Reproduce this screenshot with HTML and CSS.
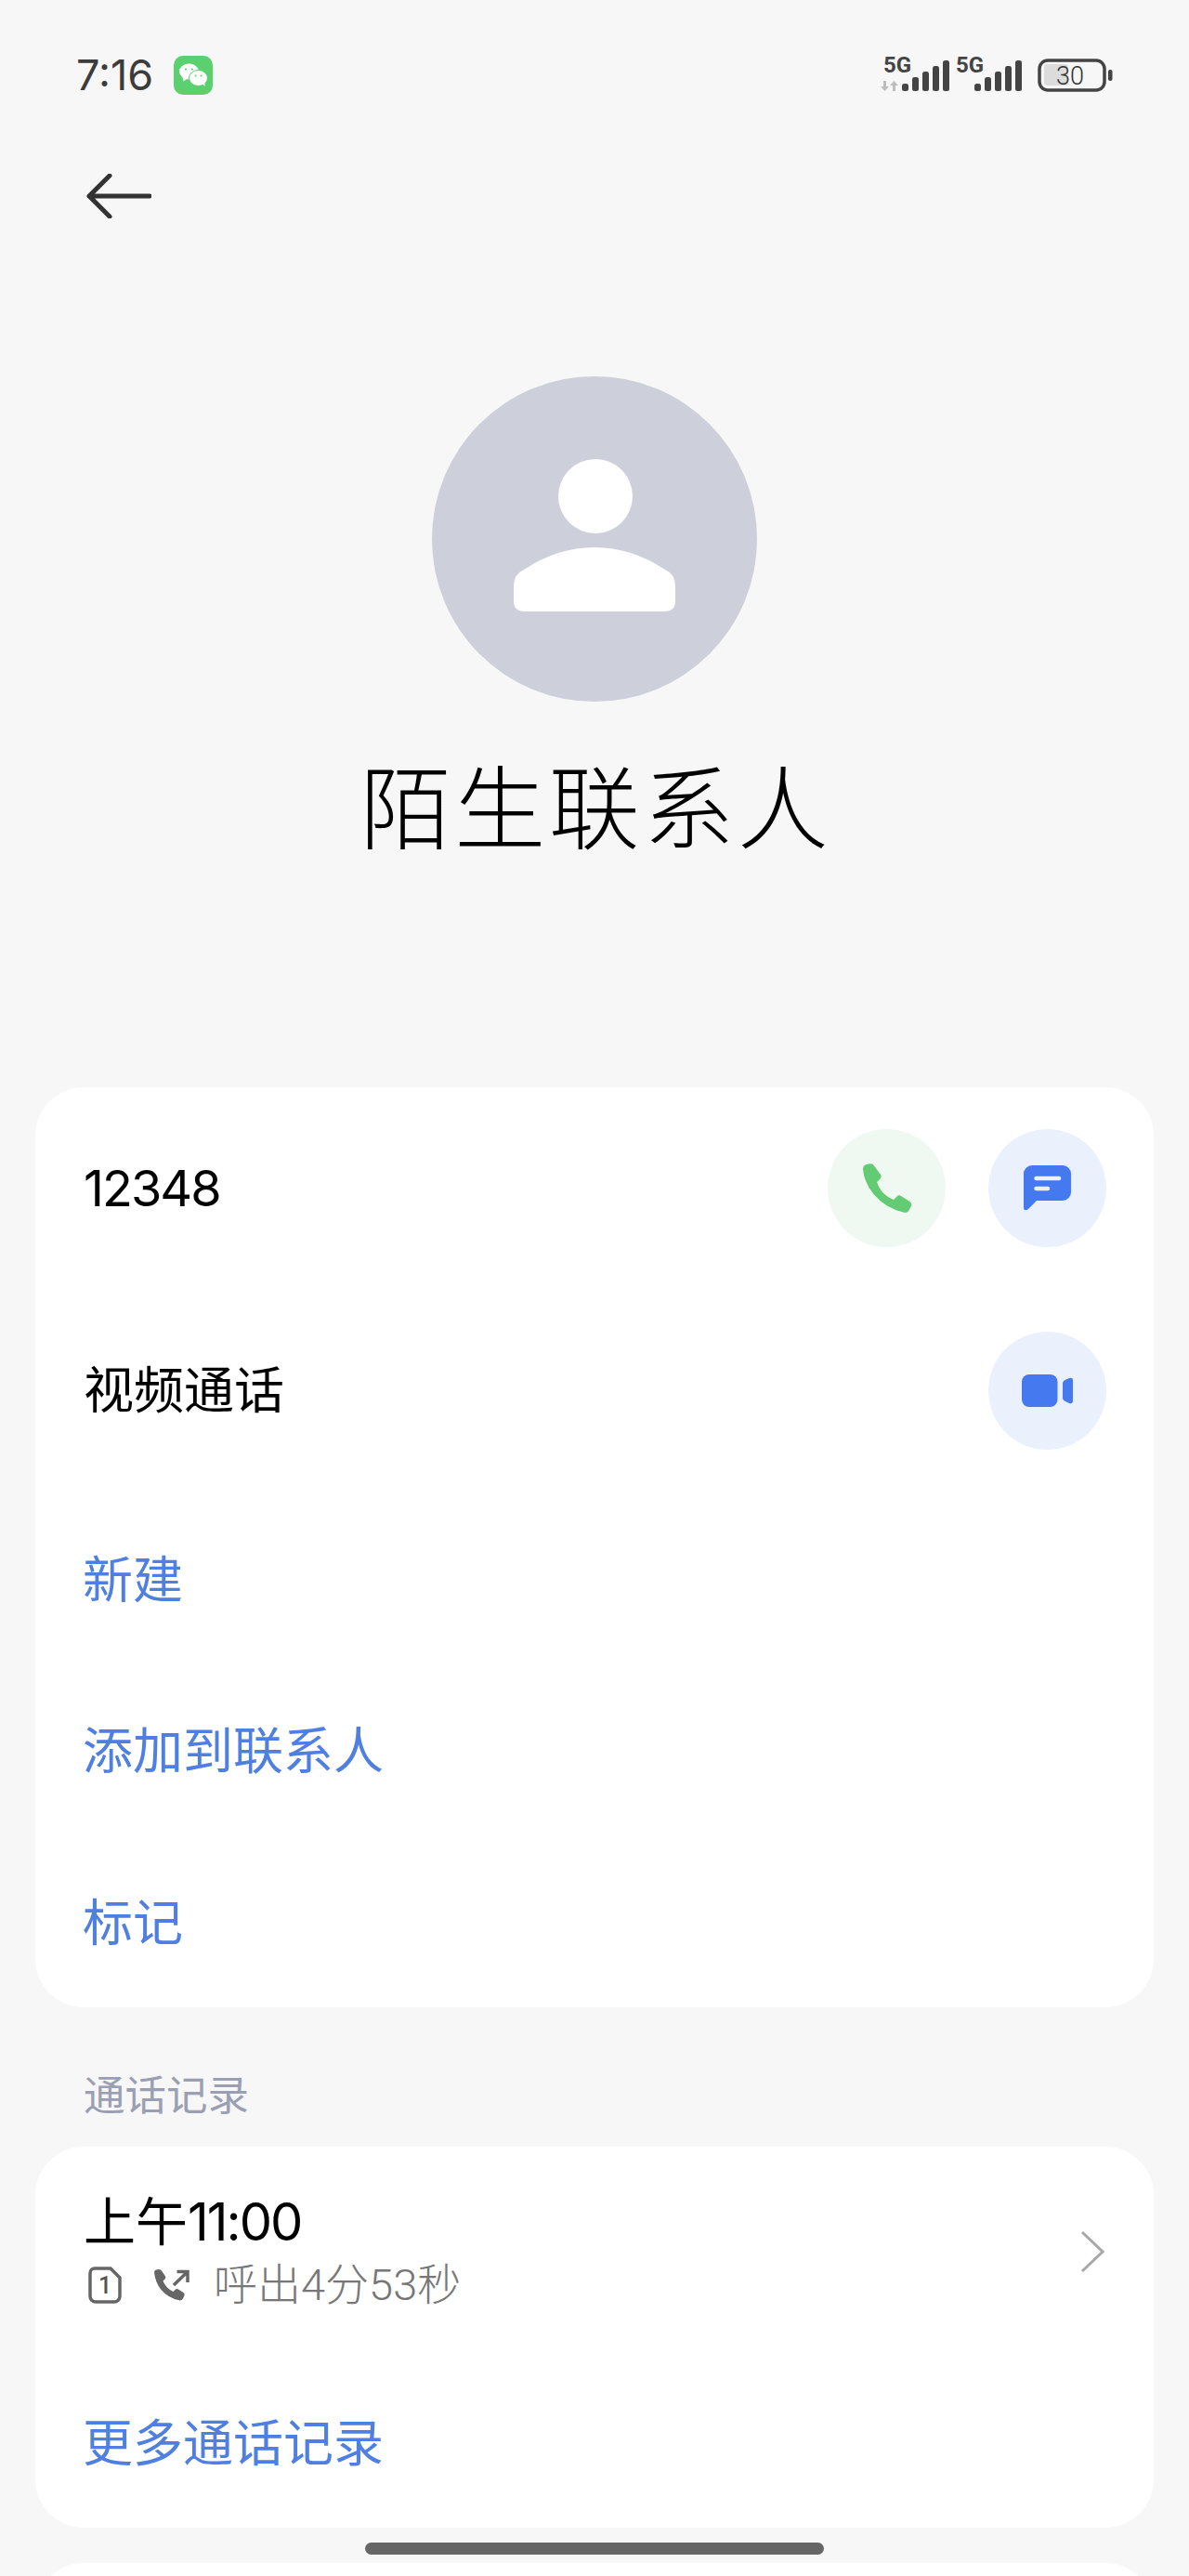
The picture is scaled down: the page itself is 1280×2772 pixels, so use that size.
FILE: index.html
```html
<!DOCTYPE html>
<html lang="zh-CN">
  <head>
    <meta charset="UTF-8" />
    <meta name="viewport" content="width=device-width, initial-scale=1.0" />
    <title>陌生联系人</title>
    <link rel="stylesheet" href="styles.css">
  </head>
  <body>
    <!--
      Status bar
    -->
    <header class="status">
      <div class="status-left">
        <span class="time">7:16</span>
        <svg class="wechat" viewBox="0 0 42 42" aria-hidden="true">
          <rect width="42" height="42" rx="10" fill="#5ad06e" />
          <ellipse cx="16.500" cy="17" rx="10.500" ry="8.500" fill="#fff" />
          <path d="M9.500 22.500L10.500 27.500L15 24.500Z" fill="#fff" />
          <ellipse cx="26.500" cy="24" rx="10" ry="8.500" fill="#fff" stroke="#5ad06e" stroke-width="1" />
          <path d="M31 30L33.500 33L33.500 28Z" fill="#fff" />
          <circle cx="13" cy="14.500" r="1.100" fill="#5ad06e" />
          <circle cx="20" cy="14.500" r="1.100" fill="#5ad06e" />
          <circle cx="23.500" cy="21.500" r="1" fill="#5ad06e" />
          <circle cx="29.500" cy="21.500" r="1" fill="#5ad06e" />
        </svg>
      </div>
      <svg class="status-right" viewBox="945 50 255 53" aria-hidden="true">
        <text class="net" x="951" y="78">5G</text>
        <path d="M951 87h3v6h3l-4.500 5-4.500-5h3zM961 98h3v-6h3l-4.500-5-4.500 5h3z" fill="#bdbdbd" />
        <rect x="971" y="90" width="7" height="8" rx="2.500" fill="#444" />
        <rect x="982" y="83" width="7" height="15" rx="2.500" fill="#444" />
        <rect x="993" y="77" width="7" height="21" rx="2.500" fill="#444" />
        <rect x="1004" y="71" width="7" height="27" rx="2.500" fill="#444" />
        <rect x="1015" y="65" width="7" height="33" rx="2.500" fill="#444" />
        <text class="net" x="1029" y="78">5G</text>
        <rect x="1049" y="90" width="7" height="8" rx="2.500" fill="#444" />
        <rect x="1060" y="83" width="7" height="15" rx="2.500" fill="#444" />
        <rect x="1071" y="77" width="7" height="21" rx="2.500" fill="#444" />
        <rect x="1082" y="71" width="7" height="27" rx="2.500" fill="#444" />
        <rect x="1093" y="65" width="7" height="33" rx="2.500" fill="#444" />
        <rect x="1124" y="69" width="26" height="23" rx="3" fill="#dcdcdc" />
        <rect x="1119" y="65" width="70" height="32" rx="9" fill="none" stroke="#444" stroke-width="3.500" />
        <rect x="1193" y="75" width="4.500" height="12" rx="2" fill="#444" />
        <text class="level" x="1152" y="91" text-anchor="middle">30</text>
      </svg>
    </header>

    <nav class="topbar">
      <svg class="back" viewBox="0 0 70 48" aria-hidden="true">
        <path d="M68 24H3M25 2L3 24l22 22" fill="none" stroke="#333" stroke-width="5" stroke-linecap="round" stroke-linejoin="round" />
      </svg>
    </nav>

    <!--
      Contact head
    -->
    <section class="contact">
      <svg class="avatar" viewBox="0 0 350 350" aria-hidden="true">
        <circle cx="175" cy="175" r="175" fill="#cdcfdb" />
        <ellipse cx="176" cy="129" rx="40" ry="40" fill="#fff" />
        <path d="M88 225Q88 213 99 208Q135 184 175 184Q215 184 251 208Q262 213 262 225V242Q262 253 250 253H100Q88 253 88 242Z" fill="#fff" />
      </svg>
      <h1 class="name">陌生联系人</h1>
    </section>

    <!--
      Actions
    -->
    <main>
      <section class="card actions">
        <div class="row">
          <span class="label number">12348</span>
          <div class="btns">
            <button class="round green" type="button" aria-label="通话">
              <svg class="icon-call" viewBox="0 0 54 54" aria-hidden="true">
                <path d="M1 6Q1 2 5 1L9 .3Q11.500 0 13 2.500L20 12Q21.500 14.500 19.500 16.500L16 20Q19 28 23 32Q28 37 34 39L37.500 35.500Q39.500 33.500 42 35L51.500 41Q54 43 53 45.500L50.500 50.500Q48.500 54 44.500 52.500Q25 48 12.500 33Q2 20 1 6Z" fill="#62cb74" />
              </svg>
            </button>
            <button class="round blue" type="button" aria-label="短信">
              <svg class="icon-msg" viewBox="0 0 51 49" aria-hidden="true">
                <path d="M9 0H42A9 9 0 0 1 51 9V29A9 9 0 0 1 42 38H14L4.500 47.500Q0 50 0 45V9A9 9 0 0 1 9 0Z" fill="#4479f0" />
                <path d="M13.500 14H38M13.500 25H26" fill="none" stroke="#ebf1fc" stroke-width="4.500" stroke-linecap="round" />
              </svg>
            </button>
          </div>
        </div>
        <div class="row video">
          <span class="label">视频通话</span>
          <div class="btns">
            <button class="round blue" type="button" aria-label="视频通话">
              <svg class="icon-video" viewBox="0 0 55 35" aria-hidden="true">
                <rect width="38.500" height="35" rx="8" fill="#4479f0" />
                <path d="M44 9.500Q44 7.500 46 6.300L51 4Q55 3 55 6V28Q55 32 51 31L46 28.500Q44 27.500 44 25.500Z" fill="#4479f0" />
              </svg>
            </button>
          </div>
        </div>
        <a class="link first">新建</a>
        <a class="link">添加到联系人</a>
        <a class="link">标记</a>
      </section>

      <h2 class="section-title">通话记录</h2>

      <section class="card history">
        <div class="call">
          <div class="call-info">
            <p class="call-time">上午<span class="digits">11:00</span></p>
            <p class="call-meta">
              <svg class="icon-sim" viewBox="0 0 36 40" aria-hidden="true">
                <path d="M7 2H24L34 12V32A6 6 0 0 1 28 38H8A6 6 0 0 1 2 32V7A5 5 0 0 1 7 2Z" fill="none" stroke="#666" stroke-width="3.500" />
                <text class="sim-num" x="18" y="29" text-anchor="middle">1</text>
              </svg>
              <svg class="icon-out" viewBox="0 0 40 34" aria-hidden="true">
                <path d="M1 3Q1 1 3 .5L6 0Q8 0 9 1.500L13 7.500Q14 9 12.500 10.500L10.500 12.500Q12 16.500 15 19.500Q18 22.500 21.500 24L23.500 22Q25 20.500 27 21.500L32.500 25Q34 26 33.500 28L32 31.500Q31 33.500 28.500 33.500Q16 31 8.500 22Q2 14 1 3Z" fill="#666" />
                <path d="M22 17L36 3.500M25.500 2.500H37V14" fill="none" stroke="#666" stroke-width="3.500" />
              </svg>
              <span>呼出4分53秒</span>
            </p>
          </div>
          <svg class="chevron" viewBox="0 0 26 46" aria-hidden="true">
            <path d="M2 2L24 23L2 44" fill="none" stroke="#a8a8a8" stroke-width="3" />
          </svg>
        </div>
        <a class="link">更多通话记录</a>
      </section>

      <section class="card next"></section>
    </main>

    <div class="home-bar"></div>
  </body>
</html>
```

FILE: styles.css
```css
/*
  Global styles
*/

:root {
  --bg: #f7f7f7;
  --link: #4f7fe0;
  --sans: Roboto, "Noto Sans CJK SC", sans-serif;
}
* {
  margin: 0;
  padding: 0;
  box-sizing: border-box;
}
html,
body {
  height: 2772px;
  overflow: hidden;
}
body {
  position: relative;
  background-color: var(--bg);
  font-family: var(--sans);
  color: #000;
}
svg {
  display: block;
}

/*
  Status bar
*/

.status {
  display: flex;
  align-items: flex-end;
  justify-content: space-between;
  height: 53px;
  margin-top: 50px;
  padding: 0 80px 0 82px;
}
.status-left {
  display: flex;
  align-items: center;
  gap: 22px;
}
.time {
  font-family: Inter, sans-serif;
  font-size: 45px;
  color: #3c3c3c;
  line-height: 45px;
}
.wechat {
  width: 42px;
  height: 42px;
}
.status-right {
  width: 255px;
  height: 53px;
}
.net {
  font: 700 24px Roboto, sans-serif;
  fill: #444;
}
.level {
  font: 300 27px Roboto, sans-serif;
  fill: #333;
}

.topbar {
  padding: 84px 0 0 93px;
}
.back {
  width: 70px;
  height: 48px;
}

/*
  Contact head
*/

.contact {
  display: flex;
  flex-direction: column;
  align-items: center;
  padding-top: 170px;
}
.avatar {
  width: 350px;
  height: 350px;
}
.name {
  margin: 58px 0 0 3px;
  font-size: 98px;
  line-height: 120px;
  font-weight: 300;
  letter-spacing: 3.500px;
}

/*
  Cards
*/

main {
  display: flex;
  flex-direction: column;
  padding: 0 38px;
  margin-top: 237px;
}
.card {
  border-radius: 52px;
  background-color: #fff;
}
.actions {
  padding-top: 45px;
}
.row {
  display: flex;
  align-items: center;
  justify-content: space-between;
  padding: 0 51px 0 52px;
}
.row.video {
  margin-top: 91px;
}
.row.video .label {
  padding-top: 2px;
}
.label {
  font-size: 54px;
  line-height: 60px;
}
.label.number {
  font-family: Inter, sans-serif;
  letter-spacing: -2px;
}
.btns {
  display: flex;
  gap: 46px;
}
.round {
  display: flex;
  align-items: center;
  justify-content: center;
  width: 127px;
  height: 127px;
  border: none;
  border-radius: 50%;
}
.round.green {
  background-color: #eff9f2;
}
.round.blue {
  background-color: #ebf1fc;
}
.icon-call {
  width: 54px;
  height: 54px;
}
.icon-msg {
  width: 51px;
  height: 49px;
}
.icon-video {
  width: 55px;
  height: 35px;
}
.link {
  display: flex;
  align-items: center;
  height: 184.5px;
  padding: 0 0 4px 51px;
  font-size: 54px;
  color: var(--link);
}
.link.first {
  margin-top: 46px;
}

.section-title {
  height: 150px;
  padding: 68px 0 0 52px;
  font-size: 44.500px;
  line-height: 56px;
  font-weight: 400;
  color: #9a9fb3;
}

.call {
  display: flex;
  align-items: center;
  justify-content: space-between;
  height: 226px;
  padding: 0 53px 0 52px;
}
.call-time {
  font-size: 56px;
  line-height: 70px;
}
.digits {
  font-family: Inter, sans-serif;
  letter-spacing: -2px;
}
.call-meta {
  display: flex;
  align-items: center;
  margin-top: 2px;
  font-size: 47px;
  line-height: 60px;
  font-weight: 300;
  color: #777;
}
.icon-sim {
  width: 36px;
  height: 40px;
  margin-left: 5px;
}
.sim-num {
  font: 500 25px Roboto, sans-serif;
  fill: #555;
}
.icon-out {
  width: 40px;
  height: 34px;
  margin-left: 34px;
  margin-right: 25px;
}
.chevron {
  width: 26px;
  height: 46px;
}

.next {
  height: 120px;
  margin-top: 38px;
}

/* sits over the page, like the system gesture bar */
.home-bar {
  position: absolute;
  left: 393px;
  top: 2736px;
  width: 494px;
  height: 13px;
  border-radius: 7px;
  background-color: #666;
}
```
